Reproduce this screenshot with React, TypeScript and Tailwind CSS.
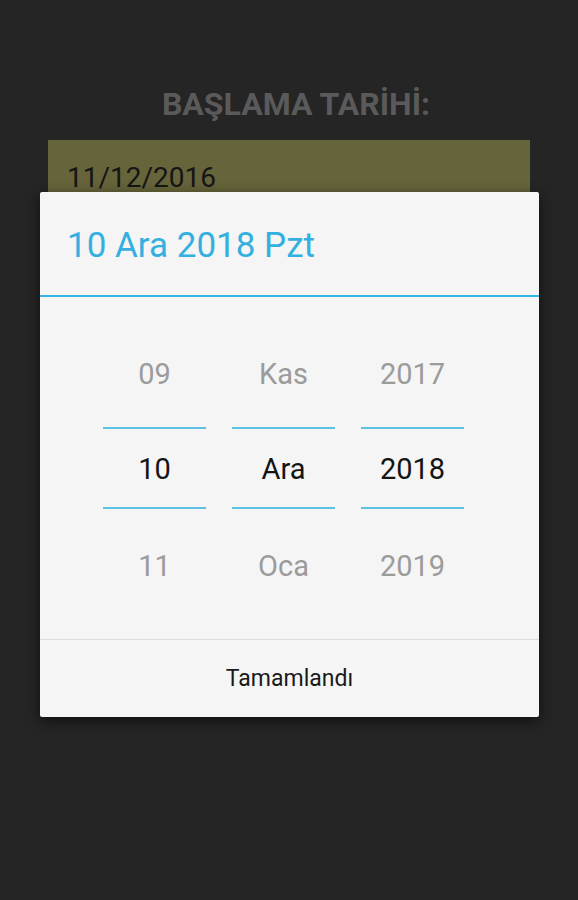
import React from "react";

const font = { fontFamily: "Roboto, 'Noto Sans', sans-serif" };

function Column({ items }: { items: [string, string, string] }) {
  return (
    <div className="flex w-[103px] flex-col items-stretch">
      <div className="flex h-[106px] items-center justify-center pt-[2px] text-[29px] text-[#9b9b9b]">{items[0]}</div>
      <div className="h-[2px] bg-[#5ec2e6]" />
      <div className="flex h-[78px] items-center justify-center pt-[4px] text-[29px] text-[#141414]">{items[1]}</div>
      <div className="h-[2px] bg-[#5ec2e6]" />
      <div className="flex h-[114px] items-center justify-center pt-[2px] text-[29px] text-[#9b9b9b]">{items[2]}</div>
    </div>
  );
}

export default function App() {
  return (
    <div className="relative min-h-[900px] w-full bg-[#252525]" style={font}>
      <div className="flex flex-col items-center pt-[84px]">
        <div className="flex h-[40px] items-center pl-[14px] text-[32px] font-bold text-[#5a5a5a]">BAŞLAMA TARİHİ:</div>
      </div>
      <div className="mx-[48px] mt-[16px] h-[64px] bg-[#66643a] pl-[19px] pt-[22px]">
        <div className="text-[28px] leading-[32px] text-[#151515]">11/12/2016</div>
      </div>

      <div className="absolute left-[40px] top-[192px] flex h-[525px] w-[499px] flex-col rounded-[2px] bg-[#f5f5f5] shadow-[0_4px_14px_rgba(0,0,0,0.6)]">
        <div className="flex h-[103px] items-center pl-[27px] pt-[6px] text-[35px] text-[#33b0e0]">10 Ara 2018 Pzt</div>
        <div className="h-[2px] bg-[#33b5e5]" />
        <div className="flex h-[342px] gap-[26px] pl-[63px] pt-[24px]">
          <Column items={["09", "10", "11"]} />
          <Column items={["Kas", "Ara", "Oca"]} />
          <Column items={["2017", "2018", "2019"]} />
        </div>
        <div className="h-[1px] bg-[#dcdcdc]" />
        <div className="flex flex-1 items-center justify-center pt-[2px] text-[23px] text-[#1a1a1a]">Tamamlandı</div>
      </div>
    </div>
  );
}
